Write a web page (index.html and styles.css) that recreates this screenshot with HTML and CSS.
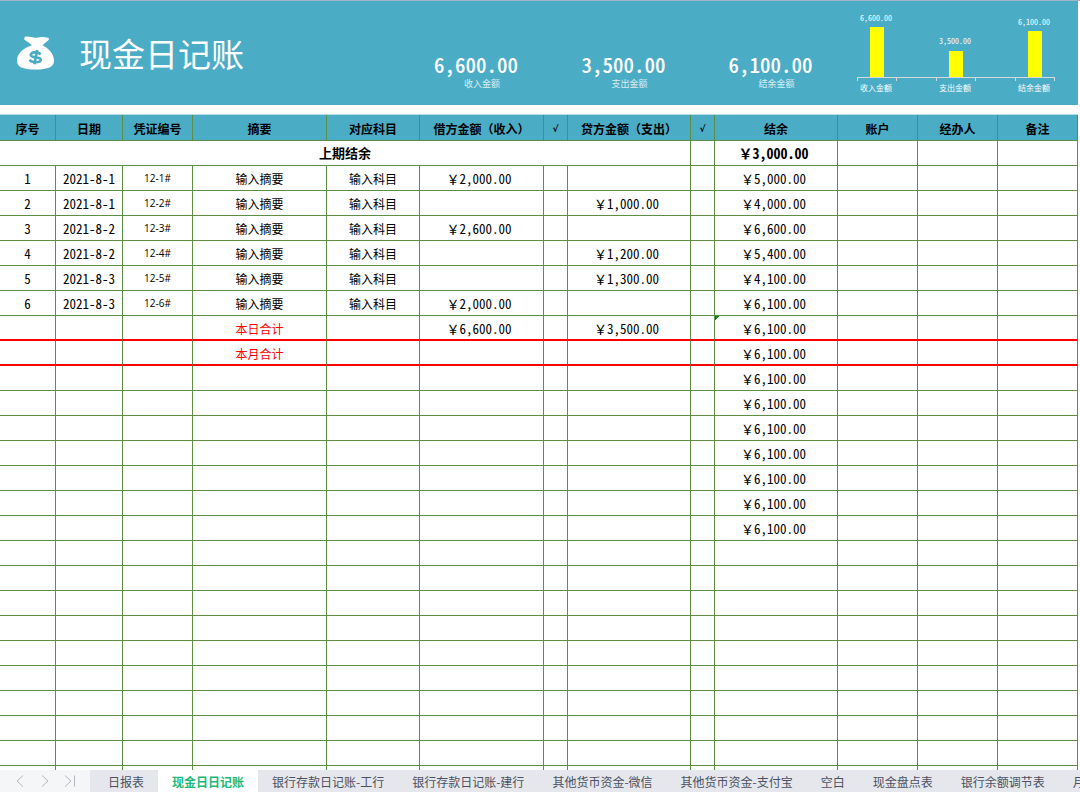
FILE: index.html
```html
<!DOCTYPE html>
<html lang="zh-CN">
<head>
<meta charset="utf-8">
<title>现金日记账</title>
<link rel="stylesheet" href="styles.css">
</head>
<body>
<main class="sheet">
  <header class="banner">
    <div class="brand">
      <svg class="bag" viewBox="0 0 38 34" aria-hidden="true">
        <path fill="#fff" d="M8 1.5C8.500 0 10 .8 12 .8C15 .4 17 2 20 1.800C23 1.600 25 .8 28 1.200L31.500 1.800C33 2.200 32.600 3.500 31.600 4.600L26 9.300C31.500 12 37.500 17.500 37.500 24.500C37.500 31 32 33.500 19 33.500C6 33.500 .5 31 .5 24.500C.5 17.500 7 12 15.500 9.300C13 7 10.500 5.200 8.600 4.200C7.500 3.600 7.500 2.500 8 1.500Z"/>
        <path fill="none" stroke="#4bacc6" stroke-width="2.600" d="M24.200 18.300C21.500 15.400 13.800 15.700 14.300 19.300C14.800 22.300 24.200 20.400 24.300 23.800C24.400 27 15.800 27.100 13 23.900M20.600 14L18 28.300"/>
      </svg>
      <h1 class="title">现金日记账</h1>
    </div>
    <div class="stat income"><strong class="amount">6,600.00</strong><span class="caption">收入金额</span></div>
    <div class="stat expense"><strong class="amount">3,500.00</strong><span class="caption">支出金额</span></div>
    <div class="stat balance"><strong class="amount">6,100.00</strong><span class="caption">结余金额</span></div>
    <svg class="chart" viewBox="0 0 240 104" role="img" aria-label="收入、支出、结余金额柱形图">
      <g fill="#ff0">
        <rect x="32" y="26" width="14" height="50"/>
        <rect x="111" y="50" width="14" height="26"/>
        <rect x="190" y="30" width="14" height="46"/>
      </g>
      <path class="axis" d="M19 76.500H217M19.500 76v4M58.500 76v4M98.500 76v4M137.500 76v4M177.500 76v4M216.500 76v4"/>
      <g>
        <text x="38" y="20">6,600.00</text>
        <text x="117" y="43">3,500.00</text>
        <text x="196" y="24">6,100.00</text>
      </g>
      <g>
        <text x="38" y="90">收入金额</text>
        <text x="117" y="90">支出金额</text>
        <text x="196" y="90">结余金额</text>
      </g>
    </svg>
  </header>

  <table class="ledger">
    <colgroup>
      <col class="c-no"><col class="c-date"><col class="c-voucher"><col class="c-summary"><col class="c-subject">
      <col class="c-debit"><col class="c-check"><col class="c-amount"><col class="c-check"><col class="c-amount">
      <col class="c-info"><col class="c-info"><col class="c-info">
    </colgroup>
    <thead>
      <tr><th>序号</th><th>日期</th><th>凭证编号</th><th>摘要</th><th>对应科目</th><th>借方金额（收入）</th><th class="check">√</th><th>贷方金额（支出）</th><th class="check">√</th><th>结余</th><th>账户</th><th>经办人</th><th>备注</th></tr>
    </thead>
    <tbody>
      <tr class="opening"><td colspan="8">上期结余</td><td></td><td class="money"><span class="yen">￥</span>3,000.00</td><td></td><td></td><td></td></tr>
      <tr><td>1</td><td>2021-8-1</td><td class="voucher">12-1#</td><td>输入摘要</td><td>输入科目</td><td class="money"><span class="yen">￥</span>2,000.00</td><td></td><td></td><td></td><td class="money"><span class="yen">￥</span>5,000.00</td><td></td><td></td><td></td></tr>
      <tr><td>2</td><td>2021-8-1</td><td class="voucher">12-2#</td><td>输入摘要</td><td>输入科目</td><td></td><td></td><td class="money"><span class="yen">￥</span>1,000.00</td><td></td><td class="money"><span class="yen">￥</span>4,000.00</td><td></td><td></td><td></td></tr>
      <tr><td>3</td><td>2021-8-2</td><td class="voucher">12-3#</td><td>输入摘要</td><td>输入科目</td><td class="money"><span class="yen">￥</span>2,600.00</td><td></td><td></td><td></td><td class="money"><span class="yen">￥</span>6,600.00</td><td></td><td></td><td></td></tr>
      <tr><td>4</td><td>2021-8-2</td><td class="voucher">12-4#</td><td>输入摘要</td><td>输入科目</td><td></td><td></td><td class="money"><span class="yen">￥</span>1,200.00</td><td></td><td class="money"><span class="yen">￥</span>5,400.00</td><td></td><td></td><td></td></tr>
      <tr><td>5</td><td>2021-8-3</td><td class="voucher">12-5#</td><td>输入摘要</td><td>输入科目</td><td></td><td></td><td class="money"><span class="yen">￥</span>1,300.00</td><td></td><td class="money"><span class="yen">￥</span>4,100.00</td><td></td><td></td><td></td></tr>
      <tr><td>6</td><td>2021-8-3</td><td class="voucher">12-6#</td><td>输入摘要</td><td>输入科目</td><td class="money"><span class="yen">￥</span>2,000.00</td><td></td><td></td><td></td><td class="money"><span class="yen">￥</span>6,100.00</td><td></td><td></td><td></td></tr>
      <tr class="total"><td></td><td></td><td></td><td class="total-name">本日合计</td><td></td><td class="money"><span class="yen">￥</span>6,600.00</td><td></td><td class="money"><span class="yen">￥</span>3,500.00</td><td></td><td class="money flagged"><span class="yen">￥</span>6,100.00</td><td></td><td></td><td></td></tr>
      <tr class="total"><td></td><td></td><td></td><td class="total-name">本月合计</td><td></td><td></td><td></td><td></td><td></td><td class="money"><span class="yen">￥</span>6,100.00</td><td></td><td></td><td></td></tr>
      <tr><td></td><td></td><td></td><td></td><td></td><td></td><td></td><td></td><td></td><td class="money"><span class="yen">￥</span>6,100.00</td><td></td><td></td><td></td></tr>
      <tr><td></td><td></td><td></td><td></td><td></td><td></td><td></td><td></td><td></td><td class="money"><span class="yen">￥</span>6,100.00</td><td></td><td></td><td></td></tr>
      <tr><td></td><td></td><td></td><td></td><td></td><td></td><td></td><td></td><td></td><td class="money"><span class="yen">￥</span>6,100.00</td><td></td><td></td><td></td></tr>
      <tr><td></td><td></td><td></td><td></td><td></td><td></td><td></td><td></td><td></td><td class="money"><span class="yen">￥</span>6,100.00</td><td></td><td></td><td></td></tr>
      <tr><td></td><td></td><td></td><td></td><td></td><td></td><td></td><td></td><td></td><td class="money"><span class="yen">￥</span>6,100.00</td><td></td><td></td><td></td></tr>
      <tr><td></td><td></td><td></td><td></td><td></td><td></td><td></td><td></td><td></td><td class="money"><span class="yen">￥</span>6,100.00</td><td></td><td></td><td></td></tr>
      <tr><td></td><td></td><td></td><td></td><td></td><td></td><td></td><td></td><td></td><td class="money"><span class="yen">￥</span>6,100.00</td><td></td><td></td><td></td></tr>
      <tr><td></td><td></td><td></td><td></td><td></td><td></td><td></td><td></td><td></td><td></td><td></td><td></td><td></td></tr>
      <tr><td></td><td></td><td></td><td></td><td></td><td></td><td></td><td></td><td></td><td></td><td></td><td></td><td></td></tr>
      <tr><td></td><td></td><td></td><td></td><td></td><td></td><td></td><td></td><td></td><td></td><td></td><td></td><td></td></tr>
      <tr><td></td><td></td><td></td><td></td><td></td><td></td><td></td><td></td><td></td><td></td><td></td><td></td><td></td></tr>
      <tr><td></td><td></td><td></td><td></td><td></td><td></td><td></td><td></td><td></td><td></td><td></td><td></td><td></td></tr>
      <tr><td></td><td></td><td></td><td></td><td></td><td></td><td></td><td></td><td></td><td></td><td></td><td></td><td></td></tr>
      <tr><td></td><td></td><td></td><td></td><td></td><td></td><td></td><td></td><td></td><td></td><td></td><td></td><td></td></tr>
      <tr><td></td><td></td><td></td><td></td><td></td><td></td><td></td><td></td><td></td><td></td><td></td><td></td><td></td></tr>
      <tr><td></td><td></td><td></td><td></td><td></td><td></td><td></td><td></td><td></td><td></td><td></td><td></td><td></td></tr>
      <tr><td></td><td></td><td></td><td></td><td></td><td></td><td></td><td></td><td></td><td></td><td></td><td></td><td></td></tr>
    </tbody>
  </table>
</main>

<nav class="tabbar" aria-label="工作表">
  <div class="scroller">
    <button class="scroll-btn" type="button" aria-label="上一个"><svg viewBox="0 0 12 12"><path d="M9 .5L3 6l6 5.500"/></svg></button>
    <button class="scroll-btn" type="button" aria-label="下一个"><svg viewBox="0 0 12 12"><path d="M3 .5L9 6l-6 5.500"/></svg></button>
    <button class="scroll-btn" type="button" aria-label="最后一个"><svg viewBox="0 0 12 12"><path d="M1 .5L7 6l-6 5.500M10.500 .5v11"/></svg></button>
  </div>
  <div class="tabs">
    <button class="tab" type="button">日报表</button>
    <button class="tab active" type="button" aria-current="page">现金日日记账</button>
    <button class="tab" type="button">银行存款日记账-工行</button>
    <button class="tab" type="button">银行存款日记账-建行</button>
    <button class="tab" type="button">其他货币资金-微信</button>
    <button class="tab" type="button">其他货币资金-支付宝</button>
    <button class="tab" type="button">空白</button>
    <button class="tab" type="button">现金盘点表</button>
    <button class="tab" type="button">银行余额调节表</button>
    <button class="tab" type="button">月</button>
  </div>
</nav>
</body>
</html>
```

FILE: styles.css
```css
* { box-sizing: border-box; }

body {
  margin: 0;
  height: 100vh;
  display: flex;
  flex-direction: column;
  background: #fff;
  color: #000;
  font-family: "Noto Sans CJK SC", sans-serif;
  font-size: 13px;
}

.sheet {
  flex: 1;
  min-height: 0;
  overflow: hidden;
  padding-right: 2px;
  border-top: 1px solid #a5b3cb;
  font-feature-settings: "hwid";
}

.banner {
  display: grid;
  grid-template-columns: 420fr 124fr 24fr 123fr 24fr 123fr 240fr;
  height: 104px;
  margin-bottom: 9px;
  background: #4bacc6;
  color: #fff;
}

.brand {
  display: flex;
  align-items: center;
  gap: 24px;
  padding-left: 16px;
}

.bag { width: 39px; height: 34px; }

.title {
  margin: 0;
  font-size: 33px;
  font-weight: 400;
  line-height: 48px;
}

.stat {
  display: flex;
  flex-direction: column;
  align-items: center;
  padding-top: 50px;
}

.income { grid-column: 2; }
.expense { grid-column: 4; }
.balance { grid-column: 6; }

.amount {
  padding-right: 12px;
  font-size: 21px;
  font-weight: 500;
  line-height: 26px;
}

.caption {
  font-size: 9px;
  line-height: 14px;
  color: #dbeef3;
}

.chart { width: 100%; height: 104px; }
.axis { fill: none; stroke: #d9d9d9; }
.chart text { fill: #fff; text-anchor: middle; font-size: 8px; }

.ledger {
  width: 100%;
  table-layout: fixed;
  border-collapse: separate;
  border-spacing: 0;
  border-top: 1px solid #b7dde8;
  text-align: center;
}

.c-no { width: 56px; }
.c-date { width: 67px; }
.c-voucher { width: 70px; }
.c-summary { width: 134px; }
.c-subject { width: 93px; }
.c-debit { width: 124px; }
.c-check { width: 24px; }
.c-amount { width: 123px; }
.c-info { width: 80px; }

.ledger th,
.ledger td {
  height: 25px;
  padding: 2px 0 0;
  border-right: 1px solid #5c8f45;
  border-bottom: 1px solid #5c8f45;
  line-height: 20px;
  white-space: nowrap;
}

.ledger th {
  height: 26px;
  background: #4bacc6;
  font-size: 12px;
  font-weight: 700;
  font-feature-settings: normal;
}

.ledger .check {
  font-family: "DejaVu Sans", sans-serif;
  font-size: 9px;
}

.ledger td:nth-child(4),
.ledger td:nth-child(5) { font-size: 12px; }

.ledger .money { padding-right: 5px; font-size: 13px; }
.yen { font-feature-settings: normal; }

.ledger .opening td { padding-top: 0; font-weight: 700; }
.ledger .opening .money { font-size: 14px; }

.ledger .voucher {
  padding: 0 0 1px;
  font-family: "Open Sans", sans-serif;
  font-size: 10px;
}

.ledger .total td { border-bottom: 2px solid #f00; }
.ledger .total-name { color: #f00; }

.ledger .flagged { background: linear-gradient(135deg, #0a8a1e 3px, transparent 3px); }

.tabbar {
  flex: none;
  display: flex;
  height: 22px;
  overflow: hidden;
  background: #e5e7ed;
}

.scroller {
  flex: none;
  display: flex;
  align-items: center;
  gap: 13px;
  width: 90px;
  padding-left: 14px;
  background: #f5f6f8;
}

.scroll-btn {
  display: flex;
  width: 12px;
  padding: 0;
  border: 0;
  background: none;
}

.scroll-btn svg {
  width: 12px;
  height: 12px;
  fill: none;
  stroke: #b4b7bd;
}

.tabs {
  display: flex;
  flex: 1;
  min-width: 0;
  overflow: hidden;
  padding-left: 4px;
}

.tab {
  flex: none;
  padding: 2px 14px 0;
  border: 0;
  background: none;
  color: #4a5162;
  font: inherit;
  font-size: 12px;
  line-height: 20px;
  white-space: nowrap;
}

.tab.active {
  background: #fff;
  color: #1bb978;
  font-weight: 700;
}
```
